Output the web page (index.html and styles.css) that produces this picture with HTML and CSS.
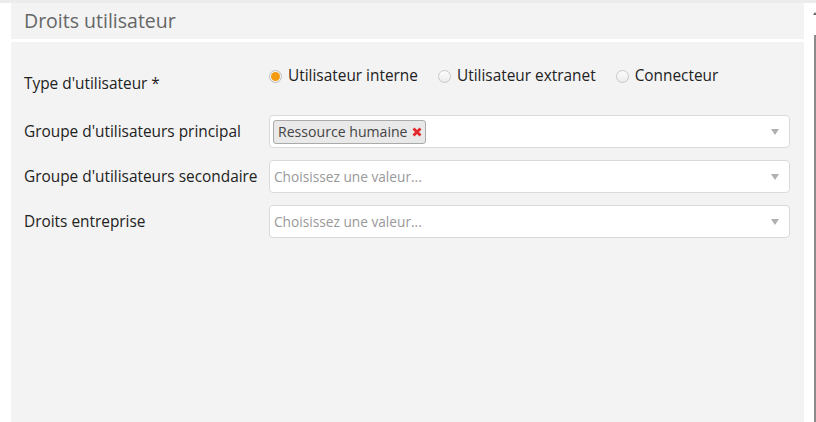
FILE: index.html
```html
<!DOCTYPE html>
<html lang="fr">
<head>
    <meta charset="UTF-8" />
    <title>Droits utilisateur</title>
    <link rel="stylesheet" href="styles.css">
</head>
<body>
    <div class="page">
        <div class="main">
            <!-- Titre du bloc -->
            <div class="panel-head">Droits utilisateur</div>

            <!-- Formulaire des droits -->
            <div class="panel-body">
                <div class="row row-radios">
                    <div class="label label-top">Type d'utilisateur *</div>
                    <div class="radios">
                        <label class="radio"><span class="dot checked"></span>Utilisateur interne</label>
                        <label class="radio"><span class="dot"></span>Utilisateur extranet</label>
                        <label class="radio"><span class="dot"></span>Connecteur</label>
                    </div>
                </div>

                <div class="row">
                    <div class="label">Groupe d'utilisateurs principal</div>
                    <div class="select">
                        <span class="tag">Ressource humaine
                            <svg class="tag-x" width="10" height="10" viewBox="0 0 10 10">
                                <path d="M1.5 1.5 L8.5 8.5 M8.5 1.5 L1.5 8.5" stroke="#e3262a" stroke-width="2.8" stroke-linecap="butt"/>
                            </svg>
                        </span>
                        <span class="arrow"></span>
                    </div>
                </div>

                <div class="row">
                    <div class="label">Groupe d'utilisateurs secondaire</div>
                    <div class="select">
                        <span class="placeholder">Choisissez une valeur...</span>
                        <span class="arrow"></span>
                    </div>
                </div>

                <div class="row">
                    <div class="label">Droits entreprise</div>
                    <div class="select">
                        <span class="placeholder">Choisissez une valeur...</span>
                        <span class="arrow"></span>
                    </div>
                </div>
            </div>
        </div>

        <!-- Barre de défilement -->
        <div class="scroll">
            <span class="scroll-up"></span>
            <span class="scroll-thumb"></span>
        </div>
    </div>
</body>
</html>
```

FILE: styles.css
```css
/* --- Page --- */
html, body {
    height: 100%;
}

body {
    margin: 0;
    background: #ffffff;
    font-family: "Open Sans", "Noto Sans", sans-serif;
    border-top: 3px solid #ececec;
    box-sizing: border-box;
}

.page {
    display: flex;
    height: 100%;
}

.main {
    display: flex;
    flex-direction: column;
    gap: 3px;
    width: 793px;
    margin-left: 11px;
}

/* --- Panels --- */
.panel-head {
    background: #f3f3f3;
    height: 36px;
    padding-left: 13px;
    font-size: 19.5px;
    line-height: 36px;
    color: #666666;
}

.panel-body {
    flex: 1;
    background: #f3f3f3;
    padding: 24px 14px 0 13px;
}

.row {
    display: flex;
    align-items: center;
    margin-bottom: 12px;
}

.row-radios {
    align-items: flex-start;
    margin-bottom: 20px;
}

.label {
    width: 245px;
    flex-shrink: 0;
    font-size: 15.4px;
    color: #222222;
}

.label-top {
    padding-top: 7px;
    line-height: 22px;
}

/* --- Radios --- */
.radios {
    display: flex;
    gap: 20px;
    line-height: 20px;
}

.radio {
    display: flex;
    align-items: center;
    gap: 6px;
    font-size: 15.4px;
    color: #222222;
}

.dot {
    width: 11px;
    height: 11px;
    border: 1px solid #c8c8c8;
    border-radius: 50%;
    background: linear-gradient(#fdfdfd, #ececec);
    position: relative;
}

.dot.checked {
    border-color: #bdbdbd;
    background: #f6f6f6;
}

.dot.checked::after {
    content: "";
    position: absolute;
    left: 1px;
    top: 1px;
    width: 9px;
    height: 9px;
    border-radius: 50%;
    background: #f39c12;
}

/* --- Selects --- */
.select {
    flex: 1;
    height: 33px;
    box-sizing: border-box;
    background: #ffffff;
    border: 1px solid #dadada;
    border-radius: 4px;
    display: flex;
    align-items: center;
    padding: 0 10px 0 3px;
}

.placeholder {
    font-size: 13.7px;
    color: #999999;
    padding-left: 1px;
}

.tag {
    height: 24px;
    box-sizing: border-box;
    display: flex;
    align-items: center;
    gap: 4px;
    padding: 0 3px 0 4px;
    background: #e9e9e9;
    border: 1px solid #aaaaaa;
    border-radius: 3px;
    font-size: 14.1px;
    color: #444444;
}

.tag-x {
    display: block;
}

.arrow {
    margin-left: auto;
    width: 0;
    height: 0;
    border-left: 4px solid transparent;
    border-right: 4px solid transparent;
    border-top: 6px solid #b0b0b0;
}

/* --- Scrollbar --- */
.scroll {
    margin-left: 9px;
    width: 3px;
    display: flex;
    flex-direction: column;
    align-items: center;
}

.scroll-up {
    margin-top: 9px;
    width: 0;
    height: 0;
    border-left: 2px solid transparent;
    border-right: 2px solid transparent;
    border-bottom: 3px solid #666666;
}

.scroll-thumb {
    margin-top: 20px;
    flex: 1;
    width: 2px;
    background: #8a8a8a;
}
```
